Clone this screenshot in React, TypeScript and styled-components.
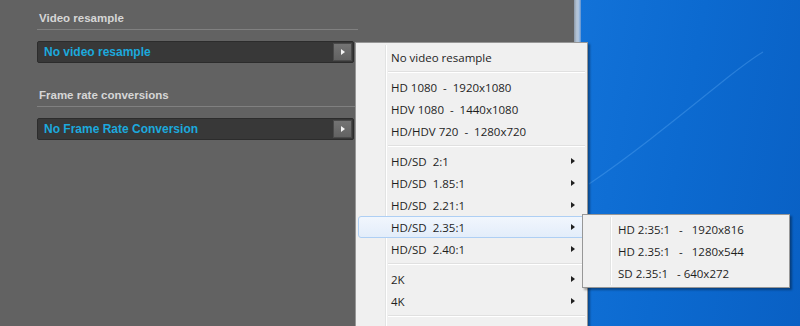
import React from "react";
import styled, { createGlobalStyle } from "styled-components";

const Global = createGlobalStyle`
  html, body { margin: 0; padding: 0; }
  body { width: 800px; height: 326px; overflow: hidden; }
`;

const Screen = styled.div`
  position: relative;
  display: flex;
  width: 800px;
  height: 326px;
  overflow: hidden;
  font-family: "Liberation Sans", Arial, sans-serif;
`;

const Panel = styled.div`
  width: 574px;
  flex: none;
  background: #626262;
  padding: 12px 0 0 37px;
  box-sizing: border-box;
`;

const Section = styled.div`
  width: 321px;
  margin-bottom: 26px;
`;

const SectionTitle = styled.div`
  font-size: 11.5px;
  font-weight: bold;
  color: #d6d6d6;
  padding: 0 0 5px 2px;
  border-bottom: 1px solid #808080;
  line-height: 12px;
  margin-bottom: 11px;
`;

const Select = styled.div`
  display: flex;
  align-items: center;
  justify-content: space-between;
  width: 317px;
  height: 22px;
  box-sizing: border-box;
  background: #383838;
  border: 1px solid #2c2c2c;
  border-radius: 2px;
  padding: 0 1px 0 6px;
`;

const SelectText = styled.span`
  font-size: 12px;
  font-weight: bold;
  color: #1ca9dd;
`;

const SelectButton = styled.div`
  width: 19px;
  height: 18px;
  display: flex;
  align-items: center;
  justify-content: center;
  background: linear-gradient(#747474, #626262);
  border: 1px solid #4a4a4a;
  box-sizing: border-box;
`;

const ButtonTri = styled.span`
  width: 0;
  height: 0;
  border-left: 4px solid #f4f4f4;
  border-top: 3px solid transparent;
  border-bottom: 3px solid transparent;
`;

const WindowEdge = styled.div`
  width: 7px;
  flex: none;
  background: linear-gradient(90deg, #8b99a9 0%, #b6c5d6 40%, #a8c2e0 70%, #5b8fcf 100%);
`;

const Desktop = styled.div`
  position: relative;
  flex: 1;
  background: linear-gradient(100deg, #1272d8 0%, #0c6ad0 45%, #0960c4 100%);
`;

const Streak = styled.svg`
  position: absolute;
  left: 0;
  top: 0;
`;

const Menu = styled.div<{ $left: number; $top: number; $width: number; $height?: number }>`
  position: absolute;
  left: ${(p) => p.$left}px;
  top: ${(p) => p.$top}px;
  width: ${(p) => p.$width}px;
  ${(p) => (p.$height ? `height: ${p.$height}px;` : "")}
  box-sizing: border-box;
  background: #f0f0f0;
  border: 1px solid #979797;
  padding: 3px 2px;
  box-shadow: 2px 2px 2px rgba(0, 0, 0, 0.35);
  font-family: "Open Sans", "Noto Sans", sans-serif;
  font-size: 11.5px;
  color: #1e1e1e;
  &::before {
    content: "";
    position: absolute;
    top: 2px;
    bottom: 2px;
    left: ${(p) => (p.$width > 220 ? 29 : 27)}px;
    width: 1px;
    background: #e2e3e3;
    border-right: 1px solid #ffffff;
  }
`;

const Item = styled.div<{ $active?: boolean; $indent: number }>`
  position: relative;
  display: flex;
  align-items: center;
  height: 22px;
  box-sizing: border-box;
  padding-left: ${(p) => p.$indent}px;
  white-space: pre;
  border: 1px solid ${(p) => (p.$active ? "#aecff4" : "transparent")};
  border-radius: 3px;
  background: ${(p) => (p.$active ? "linear-gradient(#f1f6fd, #e3edfa)" : "transparent")};
`;

const Arrow = styled.span`
  position: absolute;
  right: 9px;
  top: 7px;
  width: 0;
  height: 0;
  border-left: 4px solid #202020;
  border-top: 3.5px solid transparent;
  border-bottom: 3.5px solid transparent;
`;

const Separator = styled.div`
  height: 8px;
  display: flex;
  align-items: center;
  padding-left: 30px;
  &::after {
    content: "";
    flex: 1;
    height: 1px;
    background: #e0e0e0;
    border-bottom: 1px solid #ffffff;
  }
`;

type Entry = { label: string; sub?: boolean; active?: boolean } | "sep";

const mainEntries: Entry[] = [
  { label: "No video resample" },
  "sep",
  { label: "HD 1080  -  1920x1080" },
  { label: "HDV 1080  -  1440x1080" },
  { label: "HD/HDV 720  -  1280x720" },
  "sep",
  { label: "HD/SD  2:1", sub: true },
  { label: "HD/SD  1.85:1", sub: true },
  { label: "HD/SD  2.21:1", sub: true },
  { label: "HD/SD  2.35:1", sub: true, active: true },
  { label: "HD/SD  2.40:1", sub: true },
  "sep",
  { label: "2K", sub: true },
  { label: "4K", sub: true },
  "sep",
];

const subEntries = [
  "HD 2:35:1   -   1920x816",
  "HD 2.35:1   -   1280x544",
  "SD 2.35:1   - 640x272",
];

export default function App() {
  return (
    <>
      <Global />
      <Screen>
        <Panel>
          <Section>
            <SectionTitle>Video resample</SectionTitle>
            <Select>
              <SelectText>No video resample</SelectText>
              <SelectButton>
                <ButtonTri />
              </SelectButton>
            </Select>
          </Section>
          <Section>
            <SectionTitle>Frame rate conversions</SectionTitle>
            <Select>
              <SelectText>No Frame Rate Conversion</SelectText>
              <SelectButton>
                <ButtonTri />
              </SelectButton>
            </Select>
          </Section>
        </Panel>
        <WindowEdge />
        <Desktop>
          <Streak width="219" height="326" viewBox="0 0 219 326">
            <path
              d="M 8 184 C 55 152, 100 115, 146 78 C 160 67, 172 58, 182 52"
              fill="none"
              stroke="rgba(120,190,255,0.28)"
              strokeWidth="1.2"
            />
          </Streak>
        </Desktop>
        <Menu $left={355} $top={42} $width={233} $height={300}>
          {mainEntries.map((e, i) =>
            e === "sep" ? (
              <Separator key={i} />
            ) : (
              <Item key={i} $indent={32} $active={e.active}>
                {e.label}
                {e.sub && <Arrow />}
              </Item>
            )
          )}
        </Menu>
        <Menu $left={582} $top={214} $width={208}>
          {subEntries.map((s, i) => (
            <Item key={i} $indent={32}>
              {s}
            </Item>
          ))}
        </Menu>
      </Screen>
    </>
  );
}
